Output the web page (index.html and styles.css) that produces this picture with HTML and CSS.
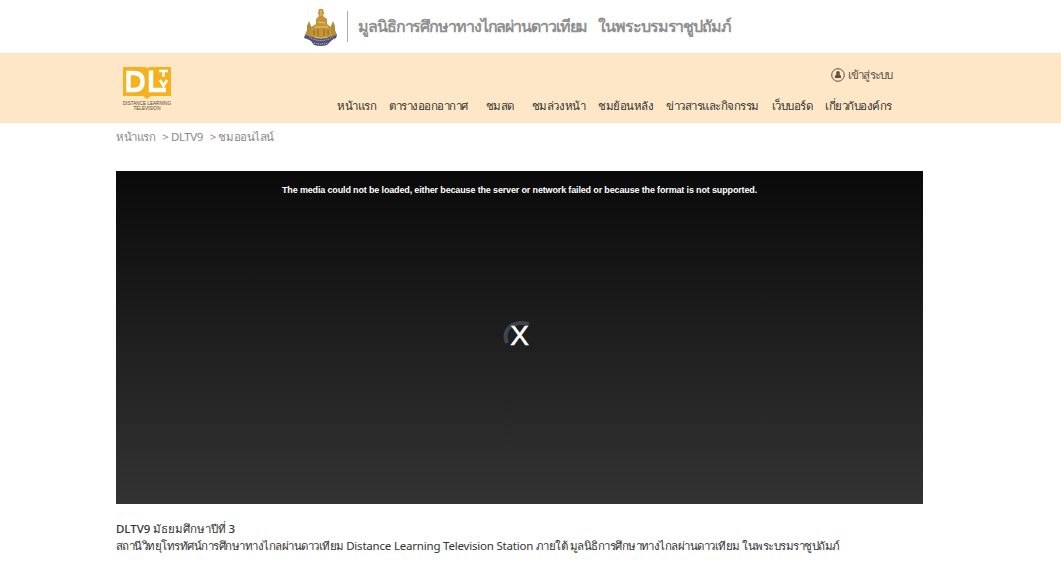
FILE: index.html
```html
<!DOCTYPE html>
<html lang="th">
<head>
    <meta charset="UTF-8">
    <title>DLTV9 ชมออนไลน์</title>
    <meta name="viewport" content="width=device-width, initial-scale=1">
    <link rel="stylesheet" href="styles.css">
</head>
<body>
    <div class="topbar">
        <svg class="emblem" viewBox="0 0 36 38" width="36" height="38">
            <path d="M2 27 Q4 25 6 27 Q18 34 30 27 Q32 25 34 27 L33 30 Q30 31 28 33 L24 37 Q18 39 11 37 L8 33 Q5 31 1 30Z" fill="#535078"/>
            <path d="M6 29 Q18 36 30 29 M11 35 Q18 37 25 35" fill="none" stroke="#d8d4dc" stroke-width="1" stroke-dasharray="1 1"/>
            <path d="M6 13 L8 18 L10 22 L10 29 L2 27 L4 22 L4 18Z M30 13 L32 18 L32 22 L34 27 L26 29 L26 22 L28 18Z" fill="#b58b3a"/>
            <path d="M16 1 H20 L21 5 L20 8 L24 11 V16 L28 19 L29 28 Q18 32 7 28 L8 19 L13 16 V11 L16 8 L15 5Z" fill="#c49535"/>
            <path d="M18 2 V8 M15 14 L22 15 M12 19 H25" stroke="#e9c878" fill="none"/>
            <path d="M11 22 V27 M15 21 V28 M21 21 V28 M25 22 V27" stroke="#8b6927" fill="none"/>
        </svg>
        <div class="divider"></div>
        <div class="foundation"><span>มูลนิธิการศึกษาทางไกลผ่านดาวเทียม</span><span>ในพระบรมราชูปถัมภ์</span></div>
    </div>

    <header class="header">
        <div class="container header-inner">
            <a class="logo" href="#">
                <svg viewBox="0 0 50 46" width="50" height="46">
                    <path d="M1 2 H22 L25 3 L28 2 H49 V31 H29 L25 34 L21 31 H1Z" fill="#f5b21c"/>
                    <path d="M6.500 8 H12 Q20.500 8 20.500 16.500 Q20.500 25 12 25 H6.500Z" fill="none" stroke="#fff" stroke-width="4.500"/>
                    <path d="M29 5.500 V25 H44" fill="none" stroke="#fff" stroke-width="4.500"/>
                    <path d="M37 6 H46 M41.500 6 V12 M38 15 L41.500 21 L45 15" fill="none" stroke="#fff" stroke-width="2.500"/>
                    <text class="logo-text" x="25" y="40" text-anchor="middle" textLength="48">DISTANCE LEARNING</text>
                    <text class="logo-text" x="25" y="44.500" text-anchor="middle" textLength="27">TELEVISION</text>
                </svg>
            </a>
            <div class="menu">
                <a class="login" href="#">
                    <svg viewBox="0 0 14 14" width="14" height="14">
                        <circle cx="7" cy="7" r="6.300" fill="none" stroke="#5c5146"/>
                        <circle cx="7" cy="4.900" r="1.900" fill="#5c5146"/>
                        <path d="M3.800 10 Q3.800 6 7 6 Q10.200 6 10.200 10Z" fill="#5c5146"/>
                    </svg>
                    <span>เข้าสู่ระบบ</span>
                </a>
                <nav class="nav">
                    <a href="#">หน้าแรก</a>
                    <a href="#">ตารางออกอากาศ</a>
                    <a class="live" href="#">ชมสด</a>
                    <a href="#">ชมล่วงหน้า</a>
                    <a href="#">ชมย้อนหลัง</a>
                    <a href="#">ข่าวสารและกิจกรรม</a>
                    <a href="#">เว็บบอร์ด</a>
                    <a href="#">เกี่ยวกับองค์กร</a>
                </nav>
            </div>
        </div>
    </header>

    <main class="container">
        <div class="breadcrumb"><a href="#">หน้าแรก</a><a href="#">&gt; DLTV9</a><span>&gt; ชมออนไลน์</span></div>
        <div class="player">
            <p class="error">The media could not be loaded, either because the server or network failed or because the format is not supported.</p>
            <div class="status">
                <svg class="spinner" viewBox="0 0 34 34" width="34" height="34">
                    <path d="M4 24 C-1 11 9 1 26 5" fill="none" stroke="#42434c" stroke-width="4"/>
                </svg>
                <span class="cross">X</span>
            </div>
        </div>
        <h1 class="title">DLTV9 มัธยมศึกษาปีที่ 3</h1>
        <p class="detail">สถานีวิทยุโทรทัศน์การศึกษาทางไกลผ่านดาวเทียม <span class="station">Distance Learning Television Station</span> ภายใต้ มูลนิธิการศึกษาทางไกลผ่านดาวเทียม ในพระบรมราชูปถัมภ์</p>
    </main>
</body>
</html>
```
FILE: styles.css
```css
body {
    margin: 0;
    background: #fff;
    color: #333;
    font-family: 'Noto Sans', sans-serif;
    font-size: 11.5px;
    letter-spacing: -0.45px;
}

a {
    color: inherit;
    text-decoration: none;
}

.container {
    width: 807px;
    margin-left: 116px;
}

/* แถบชื่อมูลนิธิ */
.topbar {
    display: flex;
    align-items: center;
    height: 53px;
    padding-left: 303px;
}

.divider {
    width: 1px;
    height: 31px;
    margin: 0 10px 0 8px;
    background: #aaa;
}

.foundation {
    display: flex;
    gap: 11px;
    color: #909090;
    font-size: 16px;
    font-weight: 600;
    letter-spacing: -1.1px;
    white-space: nowrap;
}

/* เมนูหลัก */
.header {
    height: 70px;
    background: #fee7c6;
}

.header-inner {
    display: flex;
    justify-content: space-between;
}

.logo {
    padding: 12px 0 0 6px;
}

.logo-text {
    fill: #57452f;
    font-family: 'Liberation Sans', sans-serif;
    font-size: 4.6px;
    letter-spacing: 0;
}

.menu {
    display: flex;
    flex-direction: column;
    align-items: flex-end;
    padding: 13px 31px 0 0;
}

.login {
    display: flex;
    align-items: center;
    gap: 3px;
    height: 18px;
    color: #5c5146;
    letter-spacing: -0.9px;
}

.nav {
    display: flex;
    gap: 13px;
    margin-top: 12px;
    letter-spacing: -0.49px;
    line-height: 20px;
    white-space: nowrap;
}

.live {
    padding: 0 5px;
}

.breadcrumb {
    display: flex;
    gap: 7px;
    height: 48px;
    color: #888;
    line-height: 28px;
}

/* เครื่องเล่นวิดีโอ */
.player {
    height: 333px;
    background: linear-gradient(#0a0a0a, #333);
    color: #fff;
    text-align: center;
}

.error {
    margin: 0;
    padding-top: 13px;
    font: bold 9px/12px 'Liberation Sans', sans-serif;
    letter-spacing: -0.15px;
}

.status {
    display: grid;
    place-items: center;
    margin-top: 123px;
}

.spinner,
.cross {
    grid-area: 1 / 1;
}

.cross {
    font: 28px/34px 'Liberation Sans', sans-serif;
    letter-spacing: 0;
    -webkit-text-stroke: 0.5px #fff;
}

.title {
    margin: 16px 0 0;
    font-size: 11.5px;
    font-weight: 500;
    letter-spacing: -0.05px;
    line-height: 18px;
}

.detail {
    margin: 0;
    letter-spacing: -0.51px;
    line-height: 16px;
    white-space: nowrap;
}

.station {
    letter-spacing: -0.2px;
}
```
